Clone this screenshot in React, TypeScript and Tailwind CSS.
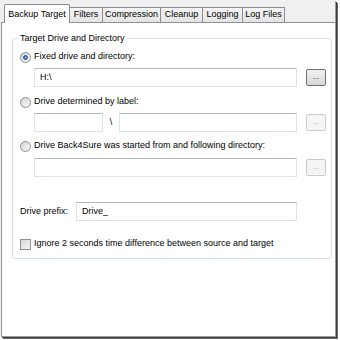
import React from "react";

const font = { fontFamily: '"Liberation Sans", Arial, sans-serif' };

function Radio({ checked }: { checked?: boolean }) {
  return (
    <span className="inline-flex h-[11px] w-[11px] shrink-0 items-center justify-center rounded-full border border-[#8e8f8f] bg-gradient-to-br from-[#d4d4d4] to-[#fafafa]">
      {checked && (
        <span className="h-[5px] w-[5px] rounded-full border border-[#1b4f8a] bg-gradient-to-br from-[#2a63a8] to-[#8fc0ee]" />
      )}
    </span>
  );
}

function Input({ value, className }: { value?: string; className?: string }) {
  return (
    <div
      className={
        "h-[19px] shrink-0 border border-[#dde3ea] border-t-[#b3b9c1] bg-white pl-[5px] text-[9px] leading-[17px] text-[#000] " +
        (className || "")
      }
    >
      {value}
    </div>
  );
}

function Dots({ enabled }: { enabled?: boolean }) {
  return (
    <div
      className={
        "flex h-[17px] w-[20px] shrink-0 items-end justify-center rounded-[2px] border pb-[4px] text-[8px] leading-none " +
        (enabled
          ? "border-[#707070] bg-gradient-to-b from-[#f2f2f2] to-[#d8d8d8] text-[#222]"
          : "border-[#c9cccf] bg-[#f4f4f4] text-[#a8a8a8]")
      }
    >
      ...
    </div>
  );
}

export default function App() {
  const tabs: [string, string][] = [
    ["Filters", "w-[34px]"],
    ["Compression", "w-[59px]"],
    ["Cleanup", "w-[43px]"],
    ["Logging", "w-[41px]"],
    ["Log Files", "w-[43px]"],
  ];
  return (
    <div className="h-[340px] w-[340px] overflow-hidden bg-white text-[9px] text-[#000]" style={font}>
      <div className="flex h-[336px] w-[335px] flex-col bg-[#f0f0f0] shadow-[1px_1px_0_#9a9a9a,2px_2px_0_#3c3c3c,3px_3px_0_#6a6a6a]">
        {/* tab strip */}
        <div className="flex h-[22px] shrink-0 items-end pl-[4px]">
          <div className="relative z-10 -mb-[1px] flex h-[19px] w-[66px] items-start justify-center rounded-t-[2px] border border-b-0 border-[#898c95] bg-white pt-[3px] text-[9px]">
            Backup Target
          </div>
          {tabs.map(([t, w]) => (
            <div
              key={t}
              className={
                "-ml-[1px] flex h-[15px] items-center justify-center border border-b-0 border-[#898c95] bg-gradient-to-b from-[#f6f6f6] to-[#e4e4e4] text-[9px] first:ml-0 " +
                w
              }
            >
              {t}
            </div>
          ))}
        </div>
        {/* panel */}
        <div className="ml-[1px] flex-1 border-t border-l border-[#8d9199] bg-white pl-[10px] pr-[3px] pt-[15px]">
          <div className="relative flex h-[221px] flex-col rounded-[3px] border border-[#d5dfe5] pl-[7px] pt-[12px]">
            <div className="absolute -top-[7px] left-[5px] bg-white px-[2px] leading-[12px]">
              Target Drive and Directory
            </div>
            <div className="flex h-[12px] items-center gap-[3px]">
              <Radio checked /> <span>Fixed drive and directory:</span>
            </div>
            <div className="mt-[5px] flex items-center pl-[14px]">
              <Input value="H:\" className="w-[263px]" />
              <div className="ml-[9px]">
                <Dots enabled />
              </div>
            </div>
            <div className="mt-[9px] flex h-[12px] items-center gap-[3px]">
              <Radio /> <span>Drive determined by label:</span>
            </div>
            <div className="mt-[5px] flex items-center pl-[14px]">
              <Input className="w-[69px]" />
              <span className="w-[16px] text-center">\</span>
              <Input className="w-[178px]" />
              <div className="ml-[9px]">
                <Dots />
              </div>
            </div>
            <div className="mt-[8px] flex h-[12px] items-center gap-[3px]">
              <Radio /> <span>Drive Back4Sure was started from and following directory:</span>
            </div>
            <div className="mt-[6px] flex items-center pl-[14px]">
              <Input className="w-[263px]" />
              <div className="ml-[9px]">
                <Dots />
              </div>
            </div>
            <div className="mt-[25px] flex items-center">
              <span className="w-[56px] shrink-0">Drive prefix:</span>
              <Input value="Drive_" className="w-[221px]" />
            </div>
            <div className="mt-[17px] flex h-[12px] items-center gap-[3px]">
              <span className="h-[11px] w-[11px] shrink-0 border border-[#8e8f8f] bg-gradient-to-br from-[#d4d4d4] to-[#fafafa]" />
              <span>Ignore 2 seconds time difference between source and target</span>
            </div>
          </div>
        </div>
      </div>
    </div>
  );
}
